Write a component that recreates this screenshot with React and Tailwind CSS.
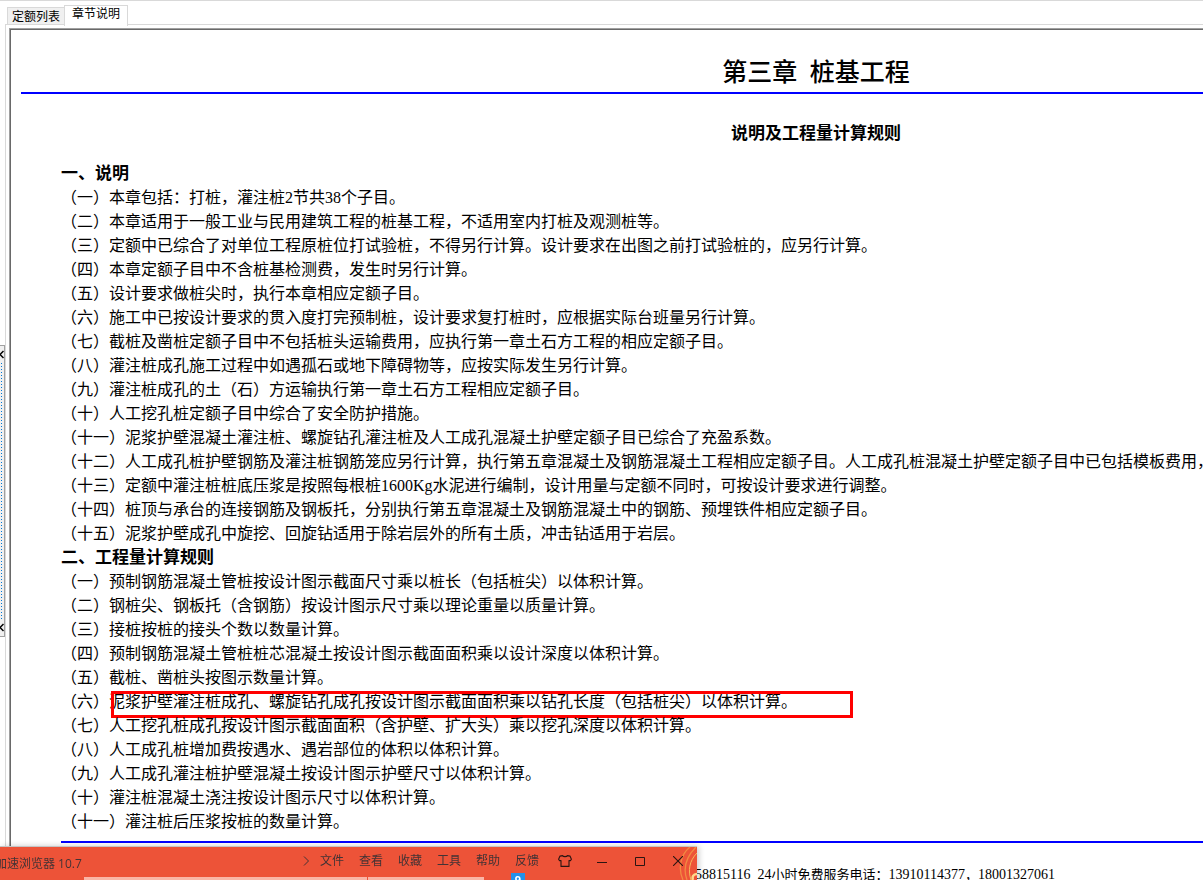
const notes = [
  '（一）本章包括：打桩，灌注桩2节共38个子目。',
  '（二）本章适用于一般工业与民用建筑工程的桩基工程，不适用室内打桩及观测桩等。',
  '（三）定额中已综合了对单位工程原桩位打试验桩，不得另行计算。设计要求在出图之前打试验桩的，应另行计算。',
  '（四）本章定额子目中不含桩基检测费，发生时另行计算。',
  '（五）设计要求做桩尖时，执行本章相应定额子目。',
  '（六）施工中已按设计要求的贯入度打完预制桩，设计要求复打桩时，应根据实际台班量另行计算。',
  '（七）截桩及凿桩定额子目中不包括桩头运输费用，应执行第一章土石方工程的相应定额子目。',
  '（八）灌注桩成孔施工过程中如遇孤石或地下障碍物等，应按实际发生另行计算。',
  '（九）灌注桩成孔的土（石）方运输执行第一章土石方工程相应定额子目。',
  '（十）人工挖孔桩定额子目中综合了安全防护措施。',
  '（十一）泥浆护壁混凝土灌注桩、螺旋钻孔灌注桩及人工成孔混凝土护壁定额子目已综合了充盈系数。',
  '（十二）人工成孔桩护壁钢筋及灌注桩钢筋笼应另行计算，执行第五章混凝土及钢筋混凝土工程相应定额子目。人工成孔桩混凝土护壁定额子目中已包括模板费用，',
  '（十三）定额中灌注桩桩底压浆是按照每根桩1600Kg水泥进行编制，设计用量与定额不同时，可按设计要求进行调整。',
  '（十四）桩顶与承台的连接钢筋及钢板托，分别执行第五章混凝土及钢筋混凝土中的钢筋、预埋铁件相应定额子目。',
  '（十五）泥浆护壁成孔中旋挖、回旋钻适用于除岩层外的所有土质，冲击钻适用于岩层。',
];

const rules = [
  '（一）预制钢筋混凝土管桩按设计图示截面尺寸乘以桩长（包括桩尖）以体积计算。',
  '（二）钢桩尖、钢板托（含钢筋）按设计图示尺寸乘以理论重量以质量计算。',
  '（三）接桩按桩的接头个数以数量计算。',
  '（四）预制钢筋混凝土管桩桩芯混凝土按设计图示截面面积乘以设计深度以体积计算。',
  '（五）截桩、凿桩头按图示数量计算。',
  '（六）泥浆护壁灌注桩成孔、螺旋钻孔成孔按设计图示截面面积乘以钻孔长度（包括桩尖）以体积计算。',
  '（七）人工挖孔桩成孔按设计图示截面面积（含护壁、扩大头）乘以挖孔深度以体积计算。',
  '（八）人工成孔桩增加费按遇水、遇岩部位的体积以体积计算。',
  '（九）人工成孔灌注桩护壁混凝土按设计图示护壁尺寸以体积计算。',
  '（十）灌注桩混凝土浇注按设计图示尺寸以体积计算。',
  '（十一）灌注桩后压浆按桩的数量计算。',
];

const MARKED_RULE = 5;

const menus = ['文件', '查看', '收藏', '工具', '帮助', '反馈'];

const SplitArrow = () => (
  <svg width="4" height="9" viewBox="0 0 4 9" fill="none" stroke="#000" strokeWidth="1.5"><path d="M3.5 1 0 4.5 3.5 8" /></svg>
);

const Splitter = () => (
  <div className="w-[5px] shrink-0 pt-[344px]">
    <div className="h-[292px] bg-[#f0f0f0] border-y border-r border-[#a0a0a0] flex flex-col items-start justify-between py-1">
      <SplitArrow />
      <div className="flex-1 w-px ml-px my-1 bg-[repeating-linear-gradient(to_bottom,#0078d7_0_1px,transparent_1px_3px)]"></div>
      <SplitArrow />
    </div>
  </div>
);

const Tabs = () => (
  <div role="tablist" className="flex items-end h-6 pl-[2px] text-[12px] leading-4">
    <button role="tab" aria-selected="false" className="h-[18px] px-1 bg-[#f0f0f0] border-t border-l border-[#d9d9d9] whitespace-nowrap">定额列表</button>
    <button role="tab" aria-selected="true" className="h-[21px] px-[7px] pb-1 -mb-px bg-white border-x border-t border-[#d9d9d9] relative whitespace-nowrap">章节说明</button>
  </div>
);

const Chapter = () => (
  <article className="w-[1600px] pl-[10px] pt-6 whitespace-nowrap text-[16px] leading-6">
    <h1 className="text-center text-[25px] leading-[38px] font-medium">第三章&nbsp; 桩基工程</h1>
    <hr className="border-0 h-[2px] bg-[#0000ff]" />
    <h2 className="mt-7 text-center text-[17px] leading-6 font-bold">说明及工程量计算规则</h2>

    <div className="mt-4 pl-10">
      <h3 className="text-[17px] leading-6 font-bold">一、说明</h3>
      <ul>
        {notes.map((text) => <li key={text}>{text}</li>)}
      </ul>
      <h3 className="text-[17px] leading-6 font-bold">二、工程量计算规则</h3>
      <ul>
        {rules.map((text, idx) => (
          <li key={text} className="relative">
            {text}
            {idx === MARKED_RULE && (
              <span className="absolute left-[50px] top-px w-[742px] h-[27px] border-[3px] border-[#ff0000]"></span>
            )}
          </li>
        ))}
      </ul>
      <hr className="mt-[7px] border-0 h-[2px] bg-[#0000ff]" />
    </div>

    <p className="mt-5 pl-[674px] text-[13px]">
      <span className="text-[14px]">58815116&nbsp; 24</span>小时免费服务电话：<span className="text-[14px]">13910114377</span>，<span className="text-[14px]">18001327061</span>
    </p>
  </article>
);

const BrowserBar = () => (
  <div className="fixed left-0 bottom-0 w-[697px] h-[34px] overflow-hidden bg-[#ed5338] border-t border-[#c5c5c5] shadow-[2px_0_6px_rgba(0,0,0,0.2)] text-[#433335] text-[12px] leading-4 font-['Open_Sans','Noto_Sans_CJK_SC',sans-serif]">
    <svg className="absolute right-0 top-0" width="24" height="33" viewBox="0 0 24 33" fill="none" stroke="#f28a42">
      <path d="M17 0C7 8 5 22 10 33M23 0C13 10 10 22 14 33" strokeWidth="1.3" />
      <path d="M24 6C16 14 15 24 18 33" stroke="#f5b85a" />
      <path d="M24 27c-4 0-5 3-4 6" stroke="#ffd889" strokeWidth="2.5" />
    </svg>
    <div className="relative flex h-[30px]">
      <span className="-ml-[5px] pt-[9px] w-[307px] shrink-0 whitespace-nowrap">加速浏览器 10.7</span>
      <button aria-label="更多" className="w-[18px] shrink-0 pb-[2px]">
        <svg width="8" height="10" viewBox="0 0 8 10" fill="none" stroke="currentColor"><path d="m2 .5 4.5 4.5L2 9.5" /></svg>
      </button>
      <nav className="flex gap-[15px] pb-[2px]">
        {menus.map((m) => <button key={m} className="w-6 whitespace-nowrap">{m}</button>)}
      </nav>
      <div className="flex ml-[7px] pb-[3px] text-[#2b1512]">
        <button aria-label="皮肤" className="w-[37px] flex items-center justify-center">
          <svg width="14" height="12" viewBox="0 0 14 12" fill="none" stroke="currentColor" strokeWidth="1.1" strokeLinejoin="round"><path d="M4.5.6C5.3 1.9 8.7 1.9 9.5.6L12 1.1 13.4 4.2 12.6 5.6H11V11.4H3V5.6H1.4L.6 4.2 2 1.1Z" /></svg>
        </button>
        <button aria-label="最小化" className="w-[38px] flex items-center justify-center">
          <svg width="10" height="12" viewBox="0 0 10 12" stroke="currentColor"><path d="M0 7.5H10" /></svg>
        </button>
        <button aria-label="最大化" className="w-[38px] flex items-center justify-center">
          <svg width="10" height="10" viewBox="0 0 10 10" fill="none" stroke="currentColor"><path d="M.5 1.5h9v8h-9z" /></svg>
        </button>
        <button aria-label="关闭" className="w-[38px] flex items-center justify-center">
          <svg width="10" height="10" viewBox="0 0 10 10" fill="none" stroke="currentColor" strokeWidth="1.1"><path d="m0 0 10 10M10 0 0 10" /></svg>
        </button>
      </div>
    </div>
    <div className="flex gap-px ml-[84px] h-[3px]">
      <div className="w-[283px] bg-[#fab5a6]"></div>
      <div className="w-[116px] bg-[#fab5a6]"></div>
    </div>
    <span className="absolute left-[511px] top-[26px] w-[14px] h-[14px] bg-[#2391ea] text-white text-center text-[11px] leading-[14px] font-bold">9</span>
  </div>
);

const App = () => {
  return (
    <div className="h-screen overflow-hidden flex bg-white text-black border-t border-[#d9d9d9] font-['Liberation_Serif','Noto_Sans_CJK_SC',sans-serif]">
      <Splitter />
      <main className="flex-1 min-w-0 flex flex-col">
        <Tabs />
        <div className="flex-1 min-h-0 border-l border-t border-[#d9d9d9] pl-[3px] pt-[3px] -mt-px">
          <div className="h-full border-l border-t border-[#a0a0a0]">
            <div className="h-full overflow-hidden border-l border-t border-[#696969]">
              <Chapter />
            </div>
          </div>
        </div>
      </main>
      <BrowserBar />
    </div>
  );
};

export default App;
